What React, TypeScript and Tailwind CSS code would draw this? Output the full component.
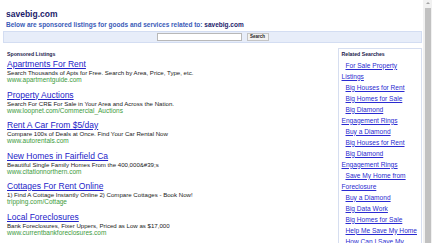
const ads = [
  {
    title: 'Apartments For Rent',
    desc: 'Search Thousands of Apts for Free. Search by Area, Price, Type, etc.',
    url: 'www.apartmentguide.com',
  },
  {
    title: 'Property Auctions',
    desc: 'Search For CRE For Sale in Your Area and Across the Nation.',
    url: 'www.loopnet.com/Commercial_Auctions',
  },
  {
    title: 'Rent A Car From $5/day',
    desc: 'Compare 100s of Deals at Once. Find Your Car Rental Now',
    url: 'www.autorentals.com',
  },
  {
    title: 'New Homes in Fairfield Ca',
    desc: 'Beautiful Single Family Homes From the 400,000&#39;s',
    url: 'www.citationnorthern.com',
  },
  {
    title: 'Cottages For Rent Online',
    desc: '1) Find A Cottage Instantly Online 2) Compare Cottages - Book Now!',
    url: 'tripping.com/Cottage',
  },
  {
    title: 'Local Foreclosures',
    desc: 'Bank Foreclosures, Fixer Uppers, Priced as Low as $17,000',
    url: 'www.currentbankforeclosures.com',
  },
];

const related = [
  'For Sale Property Listings',
  'Big Houses for Rent',
  'Big Homes for Sale',
  'Big Diamond Engagement Rings',
  'Buy a Diamond',
  'Big Houses for Rent',
  'Big Diamond Engagement Rings',
  'Save My Home from Foreclosure',
  'Buy a Diamond',
  'Big Data Work',
  'Big Homes for Sale',
  'Help Me Save My Home',
  'How Can I Save My Home',
];

export default function App() {
  return (
    <div className="flex h-[243px] w-[432px] overflow-hidden bg-white font-['Liberation_Sans',Arial,sans-serif]">
      <div className="flex-1 pl-[3px] pr-[1px]">
        <div className="pl-[3px] pt-[9px]">
          <h1 className="text-[8.5px] font-bold leading-[10px] text-[#1b1b6b]">savebig.com</h1>
          <p className="mt-[1.5px] text-[6.5px] font-bold leading-[7px] text-[#3a5bb8]">
            Below are sponsored listings for goods and services related to:{' '}
            <span className="text-[#1b1b6b]">savebig.com</span>
          </p>
        </div>

        <div className="mt-[3.5px] flex h-[12px] items-center justify-center gap-[5px] border border-[#d3ddf2] bg-[#e7edf9]">
          <input className="h-[8px] w-[85px] border border-[#b8b8b8] bg-white" />
          <button className="flex h-[8px] w-[22px] items-center justify-center border border-[#c4c4c4] bg-[#f2f2f2] text-[4.5px] font-bold leading-none text-[#222]">
            Search
          </button>
        </div>

        <div className="mt-[5px] flex items-start">
          <div className="flex-1 pl-[4px] pt-[2px]">
            <h2 className="text-[5.2px] font-bold leading-[8px] text-[#1b1b4b]">Sponsored Listings</h2>
            <div className="mt-[1px] flex flex-col gap-[6.5px]">
              {ads.map((ad) => (
                <div key={ad.title}>
                  <a href="#" className="block text-[8.5px] leading-[10px] text-[#2323c8] underline">
                    {ad.title}
                  </a>
                  <div className="text-[6.1px] leading-[7px] text-[#222]">{ad.desc}</div>
                  <div className="text-[6.5px] leading-[7px] text-[#3c9a3c]">{ad.url}</div>
                </div>
              ))}
            </div>
          </div>

          <div className="w-[84px] border border-[#d6def0] px-[2.5px]">
            <h3 className="mt-[1px] mb-[1.5px] text-[5.2px] font-bold leading-[8px] text-[#1b1b4b]">
              Related Searches
            </h3>
            <ul>
              {related.map((r, i) => (
                <li key={i} className="indent-[4px] text-[6.6px] leading-[11px]">
                  <a href="#" className="text-[#2a2ad0] underline">
                    {r}
                  </a>
                </li>
              ))}
            </ul>
          </div>
        </div>
      </div>

      <div className="flex w-[9px] flex-col items-center bg-[#f1f1f1]">
        <div className="mt-[2px] h-0 w-0 border-x-[2px] border-b-[2px] border-x-transparent border-b-[#a3a3a3]" />
        <div className="mt-[4px] w-[6px] flex-1 bg-[#c1c1c1]" />
      </div>
    </div>
  );
}
